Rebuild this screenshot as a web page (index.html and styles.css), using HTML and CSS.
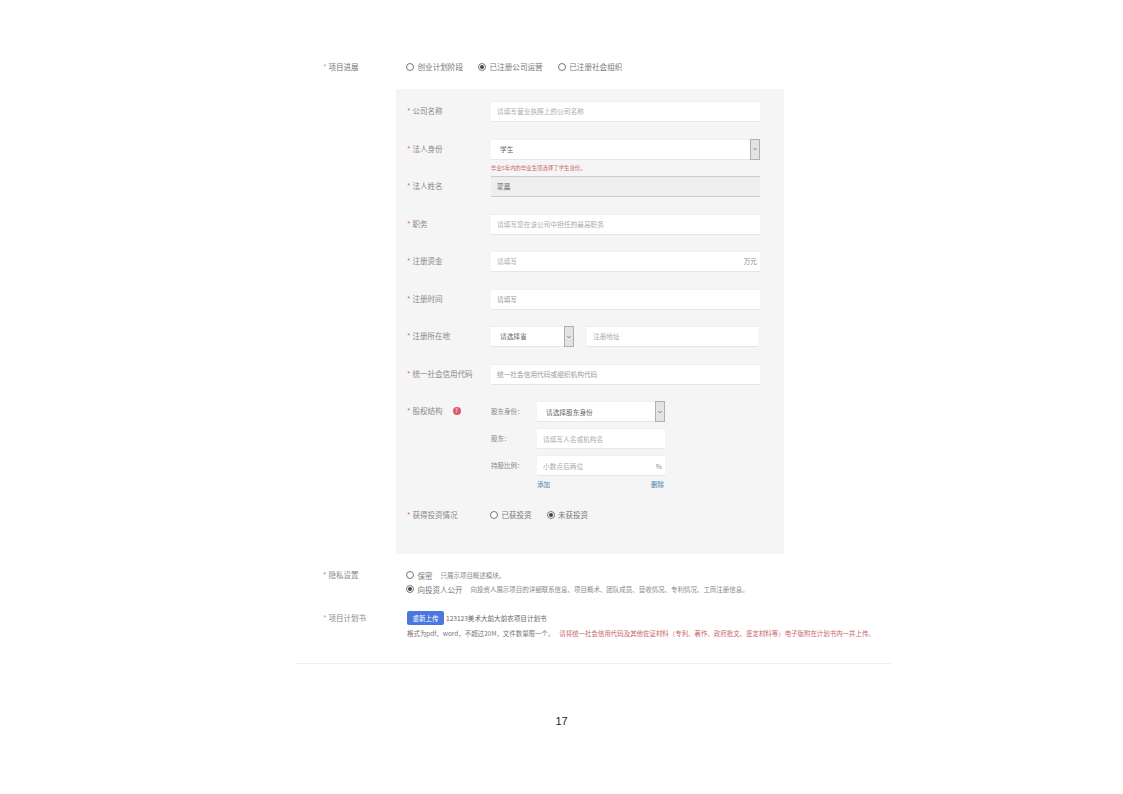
FILE: index.html
```html
<!DOCTYPE html>
<html lang="zh-CN">
<head>
<meta charset="utf-8">
<title>项目进展</title>
<link rel="stylesheet" href="styles.css">
</head>
<body>
<main class="doc">
  <div class="top-row">
    <div class="out-label"><span class="star grey">*</span>项目进展</div>
    <div class="radios top-radios">
      <span class="radio"><i class="dot"></i>创业计划阶段</span>
      <span class="radio"><i class="dot on"></i>已注册公司运营</span>
      <span class="radio"><i class="dot"></i>已注册社会组织</span>
    </div>
  </div>

  <section class="panel">
    <div class="row">
      <div class="label"><span class="star">*</span>公司名称</div>
      <div class="field ph">请填写营业执照上的公司名称</div>
    </div>
    <div class="row with-note">
      <div class="label up"><span class="star">*</span>法人身份</div>
      <div class="col">
        <div class="field select val"><span>学生</span><b class="arrow"><svg viewBox="0 0 10 10"><path d="M3 4l2 2 2-2"/></svg></b></div>
        <div class="note">毕业5年内的毕业生须选择了学生身份。</div>
      </div>
    </div>
    <div class="row">
      <div class="label"><span class="star">*</span>法人姓名</div>
      <div class="field disabled val">蒙晨</div>
    </div>
    <div class="row">
      <div class="label"><span class="star">*</span>职务</div>
      <div class="field ph">请填写您在该公司中担任的最高职务</div>
    </div>
    <div class="row">
      <div class="label"><span class="star">*</span>注册资金</div>
      <div class="field ph split"><span>请填写</span><span class="unit">万元</span></div>
    </div>
    <div class="row">
      <div class="label"><span class="star">*</span>注册时间</div>
      <div class="field val light">请填写</div>
    </div>
    <div class="row">
      <div class="label"><span class="star">*</span>注册所在地</div>
      <div class="pair">
        <div class="field select val province"><span>请选择省</span><b class="arrow"><svg viewBox="0 0 10 10"><path d="M3 4l2 2 2-2"/></svg></b></div>
        <div class="field ph address">注册地址</div>
      </div>
    </div>
    <div class="row">
      <div class="label"><span class="star">*</span>统一社会信用代码</div>
      <div class="field ph dark">统一社会信用代码或组织机构代码</div>
    </div>

    <div class="equity">
      <div class="label eq-label"><span class="star">*</span>股权结构<i class="help">?</i></div>
      <div class="eq-grid">
        <div class="sub">股东身份：</div>
        <div class="field select val"><span>请选择股东身份</span><b class="arrow"><svg viewBox="0 0 10 10"><path d="M3 4l2 2 2-2"/></svg></b></div>
        <div class="sub">股东：</div>
        <div class="field ph">请填写人名或机构名</div>
        <div class="sub">持股比例：</div>
        <div class="field ph split"><span>小数点后两位</span><span class="unit">%</span></div>
        <div class="links"><a>添加</a><a>删除</a></div>
      </div>
    </div>

    <div class="invest">
      <div class="label"><span class="star">*</span>获得投资情况</div>
      <div class="radios invest-radios">
        <span class="radio"><i class="dot"></i>已获投资</span>
        <span class="radio"><i class="dot on"></i>未获投资</span>
      </div>
    </div>
  </section>

  <div class="privacy">
    <div class="out-label"><span class="star">*</span>隐私设置</div>
    <div class="col">
      <div class="line"><span class="radio"><i class="dot"></i>保密</span><span class="hint">只展示项目概述模块。</span></div>
      <div class="line"><span class="radio"><i class="dot on"></i>向投资人公开</span><span class="hint">向投资人展示项目的详细联系信息、项目概术、团队成员、营收情况、专利情况、工商注册信息。</span></div>
    </div>
  </div>

  <div class="plan">
    <div class="out-label"><span class="star grey">*</span>项目计划书</div>
    <div class="col">
      <div class="line"><button class="upload">重新上传</button><span class="file">123123美术大前大前农项目计划书</span></div>
      <div class="line rules">格式为pdf、word，不超过20M，文件数量限一个。<span class="warn">请将统一社会信用代码及其他佐证材料（专利、著作、政府批文、鉴定材料等）电子版附在计划书内一并上传。</span></div>
    </div>
  </div>

  <hr class="rule">
  <div class="page-no">17</div>
</main>
</body>
</html>
```

FILE: styles.css
```css
* { box-sizing: border-box; }
html, body { margin: 0; padding: 0; background: #fff; }
body {
  width: 1123px;
  height: 794px;
  overflow: hidden;
  font-family: "Noto Sans CJK SC", "Liberation Sans", sans-serif;
  font-size: 7.5px;
  color: #777;
}
.doc { width: 594px; margin-left: 297px; padding-top: 60px; }

.top-row, .privacy, .plan { display: flex; align-items: flex-start; padding-left: 26px; }
.out-label { width: 84px; line-height: 14px; color: #888; flex: none; }
.top-row .out-label { color: #777; }
.top-row { height: 14px; }
.star { color: #e0656a; margin-right: 2px; }
.star.grey { color: #aaa; }

.radios { display: flex; line-height: 14px; margin-left: -1px; }
.radio { display: inline-flex; align-items: center; color: #777; }
.dot {
  width: 8px; height: 8px; border: 1px solid #777; border-radius: 50%;
  background: #fff; margin-right: 3.5px; flex: none; position: relative;
}
.dot.on::after {
  content: ""; position: absolute; left: 1px; top: 1px;
  width: 4px; height: 4px; border-radius: 50%; background: #444;
}
.top-radios { gap: 15px; font-size: 7.6px; }

.panel {
  width: 388px;
  height: 465px;
  margin: 15px 0 14px 99px;
  padding: 12px 0 0 11px;
  background: #f5f5f5;
}
.row { display: flex; height: 21px; margin-bottom: 16.5px; }
.label { width: 84px; line-height: 19px; color: #888; flex: none; white-space: nowrap; }
.col { display: flex; flex-direction: column; }

.field {
  width: 269px; height: 21px; line-height: 19px;
  padding: 0 6px;
  background: #fff;
  border-top: 1px solid #efefef;
  border-bottom: 1px solid #e6e6e6;
  white-space: nowrap;
  font-size: 6.7px;
  flex: none;
}
.ph { color: #aaa; }
.ph.dark { color: #999; }
.val { color: #666; }
.val.light { color: #999; }
.split { display: flex; justify-content: space-between; padding-right: 3px; }
.unit { color: #888; }
.disabled { background: #eee; border-top-color: #ccc; border-bottom-color: #ccc; color: #666; }
.select { display: flex; justify-content: space-between; padding: 0 0 0 9px; }
.arrow {
  width: 10px; height: 21px; margin-top: -1px;
  background: #e3e3e3; border: 1px solid #b0b0b0;
  display: flex; align-items: center; flex: none;
}
.arrow svg { width: 8px; height: 8px; fill: none; stroke: #666; stroke-width: 1; }
.note { color: #c9666a; font-size: 5.4px; line-height: 8px; margin-top: 4px; white-space: nowrap; }

.pair { display: flex; gap: 13px; }
.province { width: 83px; }
.address { width: 171px; }

.equity { display: flex; height: 100px; margin-top: 2px; }
.eq-label { display: flex; align-items: flex-start; }
.help {
  width: 8px; height: 8px; margin: 6px 0 0 10px; border-radius: 50%;
  background: #e0556a; color: #fff; font-style: normal; font-size: 6px;
  line-height: 8px; text-align: center; flex: none;
}
.eq-grid {
  display: grid;
  grid-template-columns: 46px 128px;
  grid-auto-rows: 21px;
  row-gap: 6px;
  align-content: start;
}
.eq-grid .field { width: 128px; line-height: 20px; }
.sub { line-height: 20px; color: #888; white-space: nowrap; font-size: 6.5px; }
.links {
  grid-column: 2;
  display: flex; justify-content: space-between;
  margin-top: -5px; line-height: 14px;
  font-size: 6.5px;
  padding-right: 1px;
  color: #3a7fb0;
}
.invest { display: flex; margin-top: 6.5px; line-height: 14px; }
.invest .label { line-height: 14px; }
.invest-radios { gap: 15px; }

.privacy { height: 28px; }
.line { display: flex; align-items: center; height: 14px; white-space: nowrap; }
.privacy .radio { margin-left: -1px; }
.hint { color: #888; margin-left: 8px; font-size: 6.47px; }

.plan { margin-top: 15px; height: 29px; }
.upload {
  width: 37px; height: 14px; padding: 0; border: 0; border-radius: 2px;
  background: #4a78e0; color: #fff; font: inherit; font-size: 6.5px; line-height: 14px;
}
.file { margin-left: 2px; color: #666; font-size: 6.57px; }
.rules { margin-top: 1px; color: #777; font-size: 6.45px; }
.warn { color: #c9666a; margin-left: 5px; }

.rule { margin: 23px 0 0; border: 0; border-top: 1px solid #eee; }
.page-no {
  width: 529px; margin-top: 49px; text-align: center; line-height: 16px;
  font-family: "Liberation Sans", sans-serif; font-size: 11px; color: #222;
}
```
